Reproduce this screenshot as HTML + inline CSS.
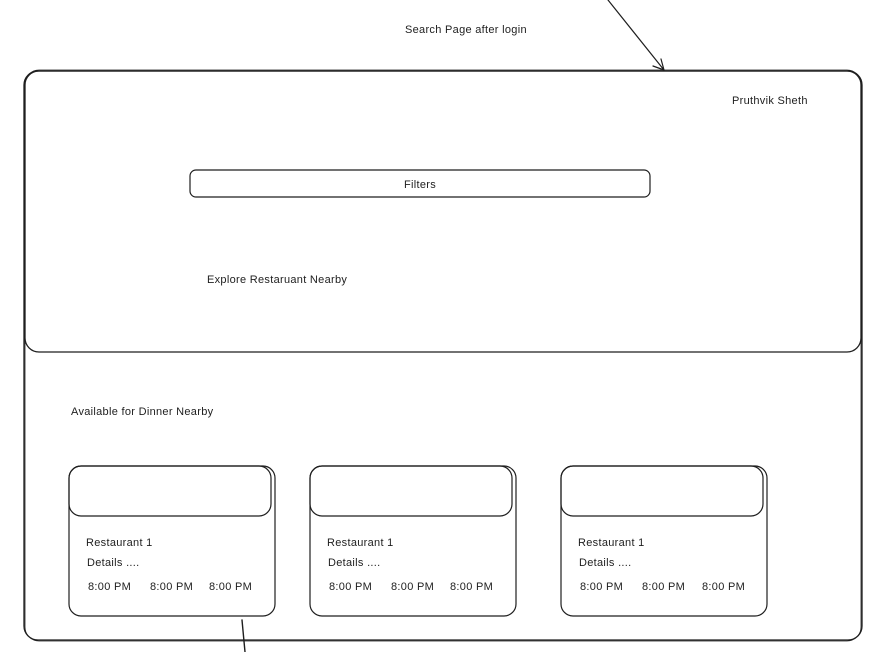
<!DOCTYPE html>
<html><head><meta charset="utf-8"><style>
html,body{margin:0;padding:0;background:#fff;width:881px;height:652px;overflow:hidden}
svg{display:block}
text{font-family:"Liberation Sans",sans-serif;fill:#1e1e1e;font-size:11px;letter-spacing:0.3px}
</style></head><body>
<svg width="881" height="652" viewBox="0 0 881 652" xmlns="http://www.w3.org/2000/svg">
<g fill="none" stroke="#1e1e1e" stroke-linecap="round">
<rect x="24" y="71" width="838" height="569" rx="14" stroke-width="1.3"/>
<rect x="25" y="70" width="836" height="571" rx="14" stroke-width="0.8"/>
<rect x="25" y="71" width="836" height="281" rx="14" stroke-width="1.3"/>
<rect x="190" y="170" width="460" height="27" rx="6" stroke-width="1.2"/>
<path d="M608 0 L664 70 M664 70 L653 66 M664 70 L661 59" stroke-width="1.2"/>
<rect x="69" y="466" width="206" height="150" rx="12" stroke-width="1.2"/>
<rect x="69" y="466" width="202" height="50" rx="12" stroke-width="1.2"/>
<rect x="310" y="466" width="206" height="150" rx="12" stroke-width="1.2"/>
<rect x="310" y="466" width="202" height="50" rx="12" stroke-width="1.2"/>
<rect x="561" y="466" width="206" height="150" rx="12" stroke-width="1.2"/>
<rect x="561" y="466" width="202" height="50" rx="12" stroke-width="1.2"/>
<path d="M242 620 L245 652" stroke-width="1.4"/>
</g>
<text x="405" y="33">Search Page after login</text>
<text x="732" y="104">Pruthvik Sheth</text>
<text x="420" y="188" text-anchor="middle" font-size="12">Filters</text>
<text x="207" y="283">Explore Restaruant Nearby</text>
<text x="71" y="415">Available for Dinner Nearby</text>
<g font-size="12">
<text x="86" y="546">Restaurant 1</text><text x="87" y="566">Details ....</text>
<text x="88" y="590">8:00 PM</text><text x="150" y="590">8:00 PM</text><text x="209" y="590">8:00 PM</text>
<text x="327" y="546">Restaurant 1</text><text x="328" y="566">Details ....</text>
<text x="329" y="590">8:00 PM</text><text x="391" y="590">8:00 PM</text><text x="450" y="590">8:00 PM</text>
<text x="578" y="546">Restaurant 1</text><text x="579" y="566">Details ....</text>
<text x="580" y="590">8:00 PM</text><text x="642" y="590">8:00 PM</text><text x="702" y="590">8:00 PM</text>
</g>
</svg>
</body></html>
